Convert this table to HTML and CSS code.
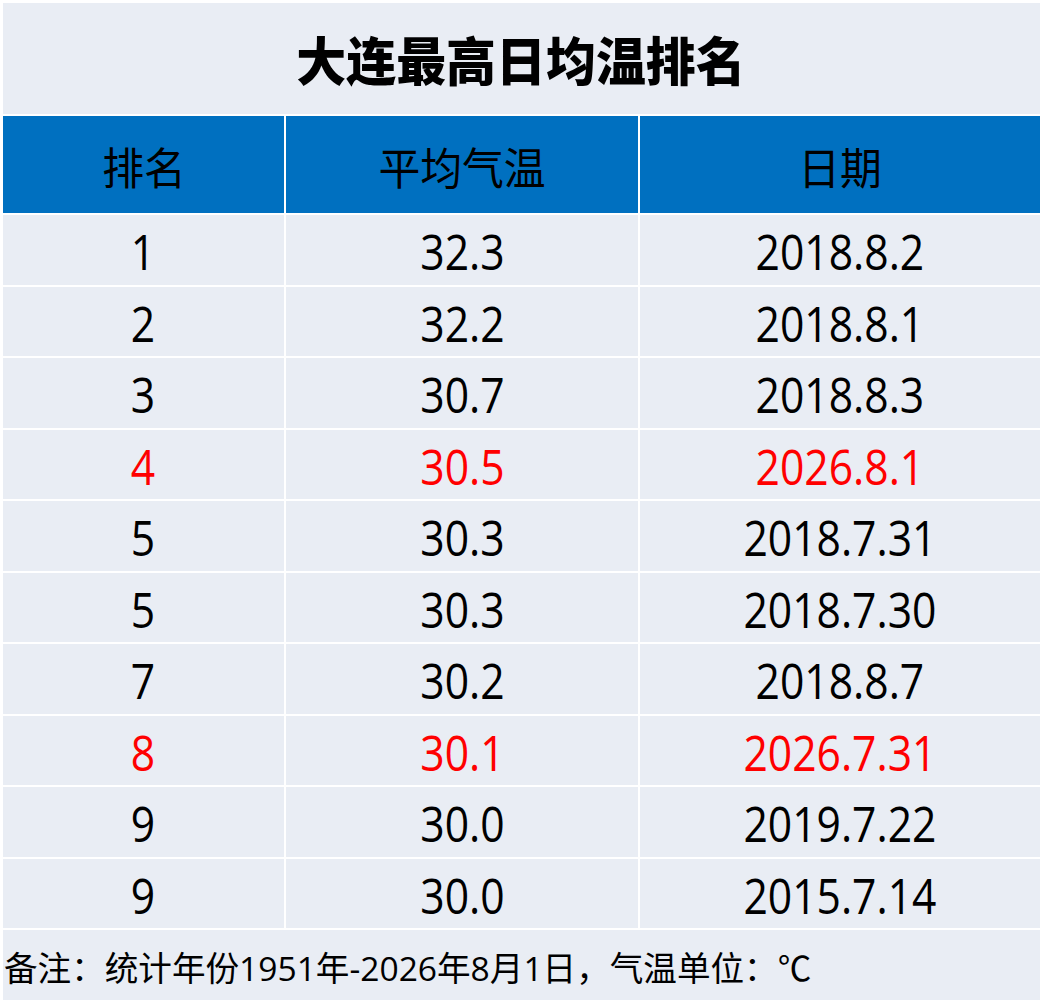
FILE: index.html
```html
<!DOCTYPE html>
<html lang="zh-CN">
<head>
<meta charset="utf-8">
<title>大连最高日均温排名</title>
<link rel="stylesheet" href="styles.css">
</head>
<body>
<div class="sheet">
  <div class="title"><span>大连最高日均温排名</span></div>
  <div class="table">
    <div class="th"><span>排名</span></div>
    <div class="th"><span>平均气温</span></div>
    <div class="th"><span>日期</span></div>

    <div class="td"><span>1</span></div>
    <div class="td"><span>32.3</span></div>
    <div class="td"><span>2018.8.2</span></div>

    <div class="td"><span>2</span></div>
    <div class="td"><span>32.2</span></div>
    <div class="td"><span>2018.8.1</span></div>

    <div class="td"><span>3</span></div>
    <div class="td"><span>30.7</span></div>
    <div class="td"><span>2018.8.3</span></div>

    <div class="td hl"><span>4</span></div>
    <div class="td hl"><span>30.5</span></div>
    <div class="td hl"><span>2026.8.1</span></div>

    <div class="td"><span>5</span></div>
    <div class="td"><span>30.3</span></div>
    <div class="td"><span>2018.7.31</span></div>

    <div class="td"><span>5</span></div>
    <div class="td"><span>30.3</span></div>
    <div class="td"><span>2018.7.30</span></div>

    <div class="td"><span>7</span></div>
    <div class="td"><span>30.2</span></div>
    <div class="td"><span>2018.8.7</span></div>

    <div class="td hl"><span>8</span></div>
    <div class="td hl"><span>30.1</span></div>
    <div class="td hl"><span>2026.7.31</span></div>

    <div class="td"><span>9</span></div>
    <div class="td"><span>30.0</span></div>
    <div class="td"><span>2019.7.22</span></div>

    <div class="td"><span>9</span></div>
    <div class="td"><span>30.0</span></div>
    <div class="td"><span>2015.7.14</span></div>

    <div class="note">备注：统计年份1951年-2026年8月1日，气温单位：℃</div>
  </div>
</div>
</body>
</html>
```
FILE: styles.css
```css
body {
  margin: 0;
  background: #ffffff;
}

.sheet {
  margin: 3px 0 0 3px;
  width: 1037px;
}

.title {
  height: 111px;
  background: #e9edf4;
  display: flex;
  align-items: center;
  justify-content: center;
  font-family: "Noto Sans CJK SC", sans-serif;
  font-weight: 900;
  font-size: 52px;
  color: #000;
}

.title span {
  display: inline-block;
  transform: scaleX(0.96);
}

.table {
  display: grid;
  grid-template-columns: 281px 352px 400px;
  grid-template-rows: 97px repeat(10, 69.5px) 70px;
  gap: 2px;
  padding-top: 2px;
  background: #ffffff;
}

.th {
  background: #0070c0;
  display: flex;
  align-items: center;
  justify-content: center;
  padding-top: 2px;
  font-family: "Noto Sans CJK SC", sans-serif;
  font-size: 44px;
  color: #000;
}

.th span {
  display: inline-block;
  transform: scaleX(0.95);
}

.td {
  background: #e9edf4;
  display: flex;
  align-items: center;
  justify-content: center;
  padding-top: 3px;
  font-family: "Open Sans", "Noto Sans CJK SC", sans-serif;
  font-size: 49px;
  color: #000;
}

.td span {
  display: inline-block;
  transform: scaleX(0.87);
}

.td.hl {
  color: #ff0000;
}

.note {
  grid-column: 1 / -1;
  background: #e9edf4;
  display: flex;
  align-items: center;
  padding-left: 1px;
  padding-top: 2px;
  font-family: "Open Sans", "Noto Sans CJK SC", sans-serif;
  font-size: 33.6px;
  color: #000;
  white-space: nowrap;
}
```
